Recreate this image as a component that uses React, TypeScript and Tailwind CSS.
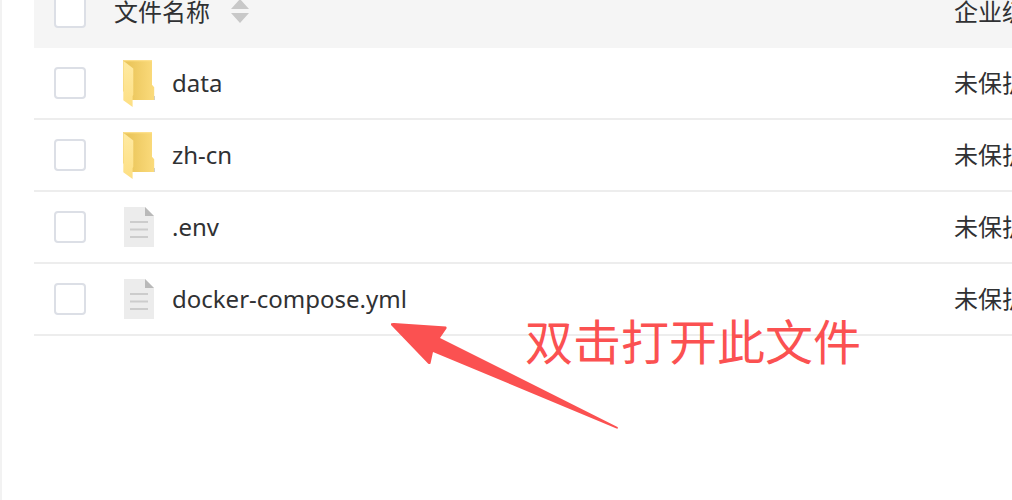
import { useState } from 'react'

type FileKind = 'folder' | 'text'

interface FileEntry {
  name: string
  kind: FileKind
  protection: string
}

const FILES: FileEntry[] = [
  { name: 'data', kind: 'folder', protection: '未保护' },
  { name: 'zh-cn', kind: 'folder', protection: '未保护' },
  { name: '.env', kind: 'text', protection: '未保护' },
  { name: 'docker-compose.yml', kind: 'text', protection: '未保护' },
]

const CHECKBOX =
  'block size-8 appearance-none rounded-sm border-2 border-[#dcdfe6] bg-white checked:border-blue-500 checked:bg-blue-500'

const CELL = 'border-b-2 border-[#ededed]'

function FolderIcon() {
  return (
    <svg viewBox="0 0 34 50" className="h-[50px] w-[34px] shrink-0" aria-hidden="true">
      <defs>
        <linearGradient id="folder-back" x1="0" y1="0" x2="1" y2="0">
          <stop offset="0.2" stopColor="#ebc65c" />
          <stop offset="1" stopColor="#fbdb7c" />
        </linearGradient>
        <linearGradient id="folder-front" x1="0" y1="0" x2="0" y2="1">
          <stop offset="0" stopColor="#ffeaa2" />
          <stop offset="1" stopColor="#fddf83" />
        </linearGradient>
      </defs>
      <path d="M32 38h1v4h-1z" fill="#c9ccd3" />
      <path d="M1 2.3h29v24.5l2.2 2.5V42H10L1 33z" fill="url(#folder-back)" />
      <path d="M1 2.3h29v1H3z" fill="#ffe18a" />
      <path d="M1.3 2.8 11.3 10.5V37l-.7 1v11L1.3 42.2z" fill="url(#folder-front)" />
    </svg>
  )
}

function TextIcon() {
  return (
    <svg viewBox="0 0 34 50" className="h-[50px] w-[34px] shrink-0" aria-hidden="true">
      <path d="M2 5h21l9 9v31H2z" fill="#ececec" />
      <path d="M23 5l9 9h-9z" fill="#b9b9b9" />
      <path d="M8 20h18M8 27.5h18M8 35h18" stroke="#cccccc" strokeWidth="2" />
    </svg>
  )
}

function FileRow({ file }: { file: FileEntry }) {
  const [checked, setChecked] = useState(false)
  return (
    <tr className="h-[72px]">
      <td className={`${CELL} pl-5`}>
        <input
          type="checkbox"
          aria-label={file.name}
          checked={checked}
          onChange={e => setChecked(e.target.checked)}
          className={CHECKBOX}
        />
      </td>
      <td className={`${CELL} pl-7`}>
        <div className="flex items-center gap-4">
          {file.kind === 'folder' ? <FolderIcon /> : <TextIcon />}
          <span>{file.name}</span>
        </div>
      </td>
      <td className={`${CELL} pl-5 whitespace-nowrap`}>{file.protection}</td>
    </tr>
  )
}

export default function App() {
  return (
    <main className="relative min-h-screen overflow-hidden border-l-2 border-[#f2f2f2] bg-white pl-8 font-['Noto_Sans','Noto_Sans_CJK_SC',sans-serif] text-2xl text-[#303133]">
      <table className="-mt-6 w-full table-fixed border-separate border-spacing-0 text-left">
        <colgroup>
          <col className="w-[60px]" />
          <col />
          <col className="w-[78px]" />
        </colgroup>
        <thead>
          <tr className="h-[72px] bg-[#f5f5f5]">
            <th className="pl-5 font-normal">
              <input type="checkbox" aria-label="全选" className={CHECKBOX} />
            </th>
            <th className="pl-5 font-normal">
              <div className="flex items-center gap-5">
                <span>文件名称</span>
                <button type="button" aria-label="排序" className="text-[#c8c8c8]">
                  <svg viewBox="0 0 20 26" className="h-[26px] w-5" fill="currentColor" aria-hidden="true">
                    <path d="M10 0l9 10H1zM1 14h18L10 24z" />
                  </svg>
                </button>
              </div>
            </th>
            <th className="pl-5 font-normal whitespace-nowrap">企业级</th>
          </tr>
        </thead>
        <tbody>
          {FILES.map(file => (
            <FileRow key={file.name} file={file} />
          ))}
        </tbody>
      </table>

      {/* callout pointing at the compose file */}
      <svg
        viewBox="0 0 230 108"
        className="absolute top-[322px] left-[388px] h-[108px] w-[230px]"
        fill="#fb5151"
        aria-hidden="true"
      >
        <path d="M1 1.5Q2 .8 4 1L56 4.5Q57 5.5 56.5 6.5L50 16 227.5 105Q229 107 226.5 106.5L43 30 40.5 41.5Q39.5 42.5 38 41.5L1 3z" />
      </svg>
      <p className="absolute top-[306px] left-[523px] text-5xl/[72px] whitespace-nowrap text-[#fb5151]">
        双击打开此文件
      </p>
    </main>
  )
}
